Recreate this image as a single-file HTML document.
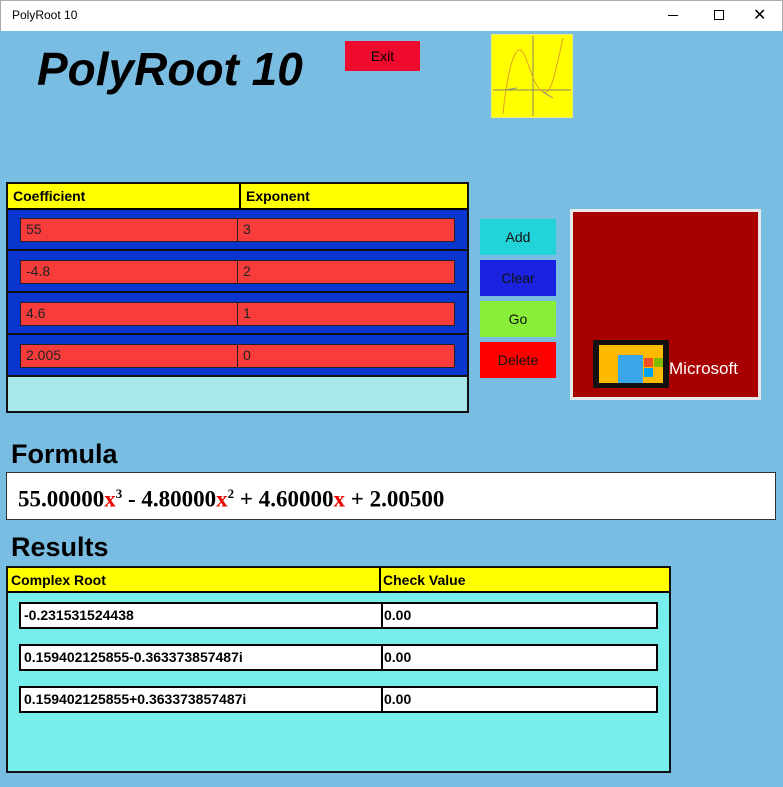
<!DOCTYPE html>
<html><head><style>
*{margin:0;padding:0;box-sizing:border-box}
body{width:783px;height:787px;overflow:hidden;background:#7abde3;font-family:"Liberation Sans",sans-serif;position:relative}
.a{position:absolute}
.tb{left:0;top:0;width:783px;height:31px;background:#fff;border:1px solid #aaa;border-bottom:none}
.hdr{background:#ffff00;font-weight:bold;font-size:14px;line-height:24px;padding-left:5px;border-right:2px solid #000}
.red{background:#f83c3c;border:1px solid #222;font-size:14px;line-height:21px;padding-left:5px;color:#222}
.wh{background:#fff;border:2px solid #000;font-size:14px;font-weight:bold;line-height:22px;padding-left:3px}
.btn{left:480px;width:76px;height:36px;font-size:14px;text-align:center;line-height:36px;color:#111}
</style></head><body>
<div class="a tb"><div class="a" style="left:11px;top:7px;font-size:12px">PolyRoot 10</div>
<div class="a" style="left:667px;top:14px;width:10px;height:1px;background:#000"></div>
<div class="a" style="left:713px;top:9px;width:10px;height:10px;border:1px solid #000"></div>
<div class="a" style="left:752px;top:4px;font-size:16px">✕</div></div>
<div class="a" style="left:37px;top:42px;font-size:46px;font-weight:bold;font-style:italic">PolyRoot 10</div>
<div class="a" style="left:345px;top:41px;width:75px;height:30px;background:#ee0a2c;text-align:center;line-height:30px;font-size:14px">Exit</div>
<svg class="a" style="left:491px;top:34px" width="82" height="84"><rect width="82" height="84" fill="#ffff00" stroke="#ddd"/><line x1="42" y1="2" x2="42" y2="82" stroke="#886"/><line x1="2" y1="56" x2="80" y2="56" stroke="#886"/><path d="M12,80 C16,40 22,18 28,16 C36,14 40,52 52,58 C60,62 64,40 72,4" fill="none" stroke="#e0a030"/><path d="M14,56 L26,54 M52,58 L62,64" stroke="#888"/></svg>
<!-- table 1 -->
<div class="a" style="left:6px;top:182px;width:463px;height:231px;border:2px solid #111;background:#a8e8ea"></div>
<div class="a hdr" style="left:8px;top:184px;width:233px;height:24px">Coefficient</div>
<div class="a hdr" style="left:241px;top:184px;width:226px;height:24px;border-right:none">Exponent</div>
<div class="a" style="left:8px;top:208px;width:459px;height:168px;background:#0a36d0;border-top:2px solid #000"></div>
<div class="a" style="left:8px;top:249px;width:459px;height:2px;background:#111"></div>
<div class="a" style="left:8px;top:291px;width:459px;height:2px;background:#111"></div>
<div class="a" style="left:8px;top:333px;width:459px;height:2px;background:#111"></div>
<div class="a" style="left:8px;top:375px;width:459px;height:2px;background:#111"></div>
<div class="a red" style="left:20px;top:218px;width:218px;height:24px">55</div><div class="a red" style="left:237px;top:218px;width:218px;height:24px">3</div>
<div class="a red" style="left:20px;top:260px;width:218px;height:24px">-4.8</div><div class="a red" style="left:237px;top:260px;width:218px;height:24px">2</div>
<div class="a red" style="left:20px;top:302px;width:218px;height:24px">4.6</div><div class="a red" style="left:237px;top:302px;width:218px;height:24px">1</div>
<div class="a red" style="left:20px;top:344px;width:218px;height:24px">2.005</div><div class="a red" style="left:237px;top:344px;width:218px;height:24px">0</div>
<div class="a btn" style="top:219px;background:#22d3da">Add</div>
<div class="a btn" style="top:260px;background:#1a22e0">Clear</div>
<div class="a btn" style="top:301px;background:#88ee38">Go</div>
<div class="a btn" style="top:342px;background:#ff0000">Delete</div>
<div class="a" style="left:570px;top:209px;width:191px;height:191px;background:#a80000;border:3px solid #e8e8e8"></div>
<div class="a" style="left:593px;top:340px;width:76px;height:48px;background:#111;border-radius:2px"></div>
<div class="a" style="left:599px;top:345px;width:64px;height:38px;background:#ffba00"></div>
<div class="a" style="left:618px;top:355px;width:25px;height:28px;background:#3aa8e8"></div>
<div class="a" style="left:644px;top:358px;width:9px;height:9px;background:#f25022"></div><div class="a" style="left:654px;top:358px;width:9px;height:9px;background:#7fba00"></div>
<div class="a" style="left:644px;top:368px;width:9px;height:9px;background:#00a4ef"></div><div class="a" style="left:654px;top:368px;width:9px;height:9px;background:#ffb900"></div>
<div class="a" style="left:669px;top:359px;color:#fff;font-size:17px">Microsoft</div>
<!-- formula -->
<div class="a" style="left:11px;top:439px;font-size:27px;font-weight:bold">Formula</div>
<div class="a" style="left:6px;top:472px;width:770px;height:48px;background:#fff;border:1px solid #333;font-family:'Liberation Serif',serif;font-weight:bold;font-size:23px;padding:13px 0 0 11px">55.00000<span style="color:#e00">x</span><sup style="font-size:13px">3</sup> - 4.80000<span style="color:#e00">x</span><sup style="font-size:13px">2</sup> + 4.60000<span style="color:#e00">x</span> + 2.00500</div>
<div class="a" style="left:11px;top:532px;font-size:27px;font-weight:bold">Results</div>
<div class="a" style="left:6px;top:566px;width:665px;height:207px;border:2px solid #111;background:#78eeec"></div>
<div class="a hdr" style="left:8px;top:568px;width:373px;height:25px;padding-left:3px;border-bottom:2px solid #000">Complex Root</div>
<div class="a hdr" style="left:381px;top:568px;width:288px;height:25px;padding-left:2px;border-right:none;border-bottom:2px solid #000">Check Value</div>
<div class="a wh" style="left:19px;top:602px;width:364px;height:27px">-0.231531524438</div><div class="a wh" style="left:381px;top:602px;width:277px;height:27px;padding-left:1px">0.00</div>
<div class="a wh" style="left:19px;top:644px;width:364px;height:27px">0.159402125855-0.363373857487i</div><div class="a wh" style="left:381px;top:644px;width:277px;height:27px;padding-left:1px">0.00</div>
<div class="a wh" style="left:19px;top:686px;width:364px;height:27px">0.159402125855+0.363373857487i</div><div class="a wh" style="left:381px;top:686px;width:277px;height:27px;padding-left:1px">0.00</div>
</body></html>
